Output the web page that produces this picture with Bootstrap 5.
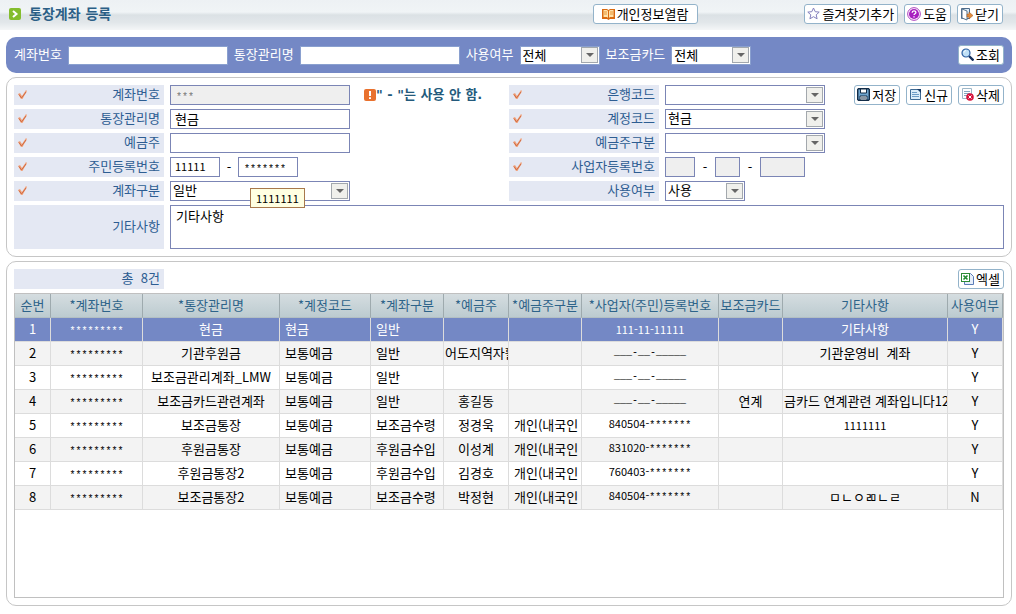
<!DOCTYPE html>
<html lang="ko">
<head>
<meta charset="utf-8">
<meta name="viewport" content="width=device-width, initial-scale=1">
<title>통장계좌 등록</title>
<link href="https://cdn.jsdelivr.net/npm/bootstrap@5.3.0/dist/css/bootstrap.min.css" rel="stylesheet">
<style>
body{font:13px/18px "Noto Sans CJK KR",sans-serif;color:#000;background:#fff}
.topbar{height:30px;background:linear-gradient(#edf1f4 0,#f0f4f6 40%,#dbe1e5 50%,#e2e7ea 75%,#f4f6f7 100%);padding:0 13px 2px 9px}
.topbar h1{font-family:"DejaVu Sans","Noto Sans CJK KR",sans-serif;font-size:14px;line-height:18px;font-weight:700;color:#2b5f86}
.shell{padding:7px 4px 8px 6px;gap:4px}
.gap-6{gap:6px}
.tool{height:20px;padding:0 3px 1px 2px;border:1px solid #93b3ca;border-radius:3px;background:#fff;color:#000;line-height:17px;display:inline-flex;align-items:center;gap:2px;white-space:nowrap}
.tool:hover{background:#eef4fa}
.tool svg{flex:none}
.tool-wide{padding:0 9px 1px 8px;margin-right:100px}
.searchbar{background:#7488c5;border-radius:10px;height:36px;padding:0 8px;color:#fff}
.searchbar .box{height:19px;border-color:#8aa0cf}
.searchbar label{white-space:nowrap;padding-bottom:2px}
.panel{border:1px solid #c6c6c6;border-radius:10px;padding:7px}
.box{height:20px;border:1px solid #7b85b5;background:#fff;color:#000;padding:0 4px 2px;border-radius:0;font:inherit;line-height:16px;min-width:0}
.box:disabled,.box[readonly]{background:#efefef;color:#777;opacity:1}
select.box{appearance:none;padding:0 20px 2px 2px;background:#fff url("data:image/svg+xml,%3Csvg xmlns='http://www.w3.org/2000/svg' width='17' height='16'%3E%3Crect x='.5' y='.5' width='16' height='15' fill='%23f0f0ec' stroke='%23a3a8ad'/%3E%3Cpath d='M5 6h8L9 10z' fill='%23666'/%3E%3C/svg%3E") no-repeat right 1px center}
.w-25x{width:25px}.w-30x{width:30px}.w-45x{width:45px}.w-50x{width:50px}.w-60x{width:60px}.w-80x{width:80px}.w-160x{width:160px}.w-180x{width:180px}
.fields{display:flex;flex-direction:column;gap:4px}
.line{display:flex;align-items:center;gap:6px}
.cap{width:150px;height:20px;flex:none;background:#e4e8f3;color:#2d5d92;padding:0 4px 2px 3px;display:flex;align-items:center;justify-content:space-between}
.cap-tall{height:44px}
.dash{width:20px;text-align:center}
.dash-sm{width:18px;text-align:center}
.stars,.mono{font-family:"Liberation Mono",monospace;font-size:10px}
.num{font-size:11px}
input.stars{font-family:"Liberation Mono",monospace;font-size:10px;padding:4px 5px 0}
input.num{font-size:11px}
textarea.box{height:44px;resize:none;padding:1px 5px;line-height:18px}
.hint{font-family:"DejaVu Sans","Noto Sans CJK KR",sans-serif;font-weight:700;color:#245a7c;white-space:nowrap}
.peek{position:absolute;left:12px;top:31px;z-index:2;height:20px;padding:0 5px;background:#ffffe1;border:1px solid #a8794c}
.gridbox{border:1px solid #c0c0c0;margin-top:4px}
.ledger{table-layout:fixed;width:100%;border-collapse:separate;border-spacing:0}
.ledger th{height:24px;padding:0 0 2px;line-height:18px;font-weight:400;color:#2d6389;text-align:center;background:linear-gradient(#d5dde0,#bccbd0);border-right:1px solid #9eaaae;border-bottom:1px solid #b3bfc3;white-space:nowrap;overflow:hidden}
.ledger td{height:24px;padding:0 0 2px;line-height:18px;text-align:center;border-right:1px solid #dcdcdc;border-bottom:1px solid #dcdcdc;white-space:nowrap;overflow:hidden}
.ledger td.stars{padding:5px 0 0}
.ledger td.s{text-align:left;padding-left:5px}
.ledger td.cut{text-align:left;padding-left:1px}
.ledger tr:nth-child(even) td{background:#f3f3f3}
.ledger tr.sel td{background:#7488c5;color:#fff}
.c-36{width:36px}.c-55{width:55px}.c-64{width:64px}.c-65{width:65px}.c-73{width:73px}.c-91{width:91px}.c-92{width:92px}.c-137{width:137px}.c-165{width:165px}
</style>
</head>
<body class="d-flex flex-column min-vh-100">
<svg width="0" height="0" class="position-absolute" aria-hidden="true">
  <symbol id="tick" viewBox="0 0 11 11"><path d="M1 5 3 4l2 3 4-6 1 1-4.500 8H4z" fill="#f0a27c"/><path d="M2 5.500l2.500 3.500L9 3" fill="none" stroke="#cf6b42" stroke-width="1"/></symbol>
</svg>

<header class="topbar d-flex align-items-center">
  <svg width="12" height="12" viewBox="0 0 12 12" aria-hidden="true"><rect width="12" height="12" rx="2" fill="#84bd2e"/><path d="M4 3l3.500 3L4 9" fill="none" stroke="#fff" stroke-width="2"/></svg>
  <h1 class="mb-0 ms-2">통장계좌 등록</h1>
  <div class="d-flex ms-auto gap-6">
    <button type="button" class="tool tool-wide"><svg width="13" height="12" viewBox="0 0 13 12"><path d="M0 1h5l1.500 1L8 1h5v10H8l-1.500 1L5 11H0z" fill="#d96a10"/><path d="M1.500 2H5l1 1v7l-1-1H1.500zM11.500 2H8L7 3v7l1-1h3.500z" fill="#ffe2a8"/><path d="M2 4h3M2 6h3M8 4h3M8 6h3" stroke="#e89434"/></svg>개인정보열람</button>
    <button type="button" class="tool"><svg width="13" height="13" viewBox="0 0 13 13"><path d="M6.500 1l1.700 3.700 4 .4-3 2.700.9 4-3.600-2.100-3.600 2.100.9-4-3-2.700 4-.4z" fill="#fff" stroke="#8480bd"/></svg>즐겨찾기추가</button>
    <button type="button" class="tool"><svg width="14" height="14" viewBox="0 0 15 15"><circle cx="7.500" cy="7.500" r="6.800" fill="#fff" stroke="#a431b8"/><circle cx="7.500" cy="7.500" r="5.400" fill="#a81fc0"/><path d="M5.500 6.200c0-2.700 4-2.500 4-.3 0 1.300-2 1.300-2 2.700M7.500 9.800v1.400" stroke="#fff" stroke-width="1.400" fill="none"/></svg>도움</button>
    <button type="button" class="tool"><svg width="13" height="14" viewBox="0 0 13 14"><path d="M1.500 1.500h8v10h-8z" fill="#dceaf6" stroke="#4c6b8a"/><path d="M2 2l5 2v9l-5-2z" fill="#fff" stroke="#56748f"/><path d="M7 7h2V5l4 3.500L9 12v-2H7z" fill="#e08a3c" stroke="#9c5a24" stroke-width=".5"/></svg>닫기</button>
  </div>
</header>

<main class="shell d-flex flex-column flex-grow-1">
  <form class="searchbar d-flex align-items-center gap-6">
    <label for="q1">계좌번호</label><input id="q1" class="box w-160x">
    <label for="q2">통장관리명</label><input id="q2" class="box w-160x">
    <label for="q3">사용여부</label><select id="q3" class="box w-80x"><option>전체</option></select>
    <label for="q4">보조금카드</label><select id="q4" class="box w-80x"><option>전체</option></select>
    <button type="button" class="tool ms-auto"><svg width="13" height="13" viewBox="0 0 13 13"><path d="M8 8l4.500 4.500" stroke="#16305c" stroke-width="2.400"/><circle cx="5" cy="5" r="4" fill="#bfe0f7" stroke="#2b5da0" stroke-width="1.200"/><path d="M3 4.500C3.300 3 4 2.700 5 2.600" stroke="#fff" fill="none"/></svg>조회</button>
  </form>

  <section class="panel">
    <div class="row g-0">
      <div class="col-6 fields">
        <div class="line"><label class="cap" for="f1"><svg width="11" height="11"><use href="#tick"/></svg>계좌번호</label><input id="f1" class="box stars w-180x" value="***" readonly>
          <span class="hint d-flex align-items-center ms-2"><svg width="12" height="12" viewBox="0 0 12 12"><rect width="12" height="12" rx="2" fill="#e9712e"/><path d="M6 2v5M6 8.200V10" stroke="#fff" stroke-width="2"/></svg><span>" - "는 사용 안 함.</span></span></div>
        <div class="line"><label class="cap" for="f2"><svg width="11" height="11"><use href="#tick"/></svg>통장관리명</label><input id="f2" class="box w-180x" value="현금"></div>
        <div class="line"><label class="cap" for="f3"><svg width="11" height="11"><use href="#tick"/></svg>예금주</label><input id="f3" class="box w-180x"></div>
        <div class="line"><label class="cap" for="f4"><svg width="11" height="11"><use href="#tick"/></svg>주민등록번호</label>
          <div class="d-flex align-items-center"><input id="f4" class="box num w-50x" value="11111"><span class="dash-sm">-</span>
            <span class="position-relative d-flex"><input class="box stars w-60x" value="*******" aria-label="주민등록번호 뒷자리"><span class="peek num" role="tooltip">1111111</span></span></div></div>
        <div class="line"><label class="cap" for="f5"><svg width="11" height="11"><use href="#tick"/></svg>계좌구분</label><select id="f5" class="box w-180x"><option>일반</option></select></div>
      </div>
      <div class="col-6 d-flex justify-content-between align-items-start">
        <div class="fields">
          <div class="line"><label class="cap" for="g1"><svg width="11" height="11"><use href="#tick"/></svg>은행코드</label><select id="g1" class="box w-160x"><option></option></select></div>
          <div class="line"><label class="cap" for="g2"><svg width="11" height="11"><use href="#tick"/></svg>계정코드</label><select id="g2" class="box w-160x"><option>현금</option></select></div>
          <div class="line"><label class="cap" for="g3"><svg width="11" height="11"><use href="#tick"/></svg>예금주구분</label><select id="g3" class="box w-160x"><option></option></select></div>
          <div class="line"><label class="cap" for="g4"><svg width="11" height="11"><use href="#tick"/></svg>사업자등록번호</label>
            <div class="d-flex align-items-center"><input id="g4" class="box w-30x" disabled><span class="dash">-</span><input class="box w-25x" disabled aria-label="사업자등록번호 둘째"><span class="dash">-</span><input class="box w-45x" disabled aria-label="사업자등록번호 셋째"></div></div>
          <div class="line"><label class="cap" for="g5"><span></span>사용여부</label><select id="g5" class="box w-80x"><option>사용</option></select></div>
        </div>
        <div class="d-flex gap-6">
          <button type="button" class="tool"><svg width="13" height="13" viewBox="0 0 13 13"><path d="M1.500.7h10l.8.8v10l-.8.8h-10l-.8-.8v-10z" fill="#6fa5cf" stroke="#122c48" stroke-width="1.400"/><path d="M3.500 1h6v4h-6zM3 8h7v4H3z" fill="#fff" stroke="#122c48"/><path d="M4 10h5" stroke="#122c48"/></svg>저장</button>
          <button type="button" class="tool"><svg width="13" height="13" viewBox="0 0 13 13"><path d="M1.500 1.500h10v10h-10z" fill="#dcecf8" stroke="#3f6a94"/><path d="M8 1h4v4z" fill="#163a66"/><path d="M3 4.500h5M3 6.500h7M3 8.500h7" stroke="#6d9cc6"/></svg>신규</button>
          <button type="button" class="tool"><svg width="13" height="13" viewBox="0 0 13 13"><path d="M1.500.500h9v10h-9z" fill="#fff" stroke="#9db7c8"/><path d="M3 3.500h6M3 5.500h6M3 7.500h4" stroke="#86a9c0"/><circle cx="9" cy="9" r="3.800" fill="#d8143c"/><path d="M7.500 7.500l3 3M10.500 7.500l-3 3" stroke="#fff"/></svg>삭제</button>
        </div>
      </div>
    </div>
    <div class="line mt-1"><label class="cap cap-tall" for="memo"><span></span>기타사항</label><textarea id="memo" class="box flex-grow-1">기타사항</textarea></div>
  </section>

  <section class="panel d-flex flex-column flex-grow-1">
    <div class="d-flex justify-content-between">
      <div class="cap"><span></span>총&nbsp; 8건</div>
      <button type="button" class="tool"><svg width="13" height="13" viewBox="0 0 13 13"><path d="M3.500 1.500h6l3 3v8h-9z" fill="#e6eefa" stroke="#5b7db8"/><rect x=".5" y="1.500" width="8" height="8" fill="#fff" stroke="#2c8a35"/><path d="M2.500 3.500l4 4M6.500 3.500l-4 4" stroke="#1f8a2c" stroke-width="1.600"/></svg>엑셀</button>
    </div>
    <div class="gridbox flex-grow-1">
      <table class="ledger">
        <colgroup><col class="c-36"><col class="c-92"><col class="c-137"><col class="c-91"><col class="c-73"><col class="c-65"><col class="c-73"><col class="c-137"><col class="c-64"><col class="c-165"><col class="c-55"></colgroup>
        <thead><tr><th>순번</th><th>*계좌번호</th><th>*통장관리명</th><th>*계정코드</th><th>*계좌구분</th><th>*예금주</th><th>*예금주구분</th><th>*사업자(주민)등록번호</th><th>보조금카드</th><th>기타사항</th><th>사용여부</th></tr></thead>
        <tbody>
          <tr class="sel"><td>1</td><td class="stars">*********</td><td>현금</td><td class="s">현금</td><td class="s">일반</td><td></td><td></td><td class="num">111-11-11111</td><td></td><td>기타사항</td><td>Y</td></tr>
          <tr><td>2</td><td class="stars">*********</td><td>기관후원금</td><td class="s">보통예금</td><td class="s">일반</td><td class="cut">어도지역자활</td><td></td><td class="mono">___-__-_____</td><td></td><td>기관운영비&nbsp; 계좌</td><td>Y</td></tr>
          <tr><td>3</td><td class="stars">*********</td><td>보조금관리계좌_LMW</td><td class="s">보통예금</td><td class="s">일반</td><td></td><td></td><td class="mono">___-__-_____</td><td></td><td></td><td>Y</td></tr>
          <tr><td>4</td><td class="stars">*********</td><td>보조금카드관련계좌</td><td class="s">보통예금</td><td class="s">일반</td><td>홍길동</td><td></td><td class="mono">___-__-_____</td><td>연계</td><td class="cut">금카드 연계관련 계좌입니다12</td><td>Y</td></tr>
          <tr><td>5</td><td class="stars">*********</td><td>보조금통장</td><td class="s">보통예금</td><td class="s">보조금수령</td><td>정경욱</td><td class="s">개인(내국인</td><td class="num">840504-<span class="stars">*******</span></td><td></td><td class="num">1111111</td><td>Y</td></tr>
          <tr><td>6</td><td class="stars">*********</td><td>후원금통장</td><td class="s">보통예금</td><td class="s">후원금수입</td><td>이성계</td><td class="s">개인(내국인</td><td class="num">831020-<span class="stars">*******</span></td><td></td><td></td><td>Y</td></tr>
          <tr><td>7</td><td class="stars">*********</td><td>후원금통장2</td><td class="s">보통예금</td><td class="s">후원금수입</td><td>김경호</td><td class="s">개인(내국인</td><td class="num">760403-<span class="stars">*******</span></td><td></td><td></td><td>Y</td></tr>
          <tr><td>8</td><td class="stars">*********</td><td>보조금통장2</td><td class="s">보통예금</td><td class="s">보조금수령</td><td>박정현</td><td class="s">개인(내국인</td><td class="num">840504-<span class="stars">*******</span></td><td></td><td>ㅁㄴㅇㄻㄴㄹ</td><td>N</td></tr>
        </tbody>
      </table>
    </div>
  </section>
</main>
<script src="https://cdn.jsdelivr.net/npm/bootstrap@5.3.0/dist/js/bootstrap.bundle.min.js"></script>
</body>
</html>
